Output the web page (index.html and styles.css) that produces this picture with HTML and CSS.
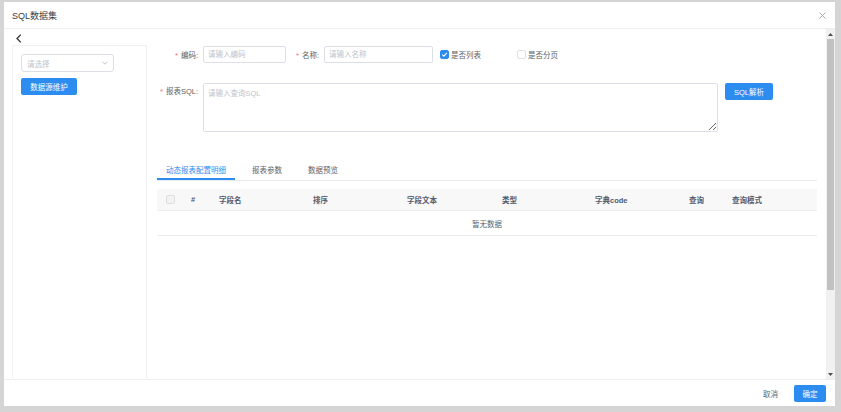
FILE: index.html
```html
<!DOCTYPE html>
<html lang="zh-CN">
<head>
<meta charset="utf-8">
<title>SQL数据集</title>
<link rel="stylesheet" href="styles.css">
</head>
<body>
<div class="modal">
  <div class="m-header">
    <span class="m-title">SQL数据集</span>
    <svg class="m-close" width="7" height="7" viewBox="0 0 7 7"><path d="M0.5 0.5L6.5 6.5M6.5 0.5L0.5 6.5" stroke="#a0a4ab" stroke-width="0.9" fill="none"/></svg>
  </div>
  <div class="m-body">
    <div class="content">
      <div class="back">
        <svg width="6" height="9" viewBox="0 0 6 9"><path d="M4.8 0.6L1 4.5L4.8 8.4" stroke="#333" stroke-width="1.3" fill="none"/></svg>
      </div>
      <div class="main">
        <aside class="left-panel">
          <div class="select">
            <span>请选择</span>
            <svg width="6" height="4" viewBox="0 0 6 4"><path d="M0.5 0.8L3 3.2L5.5 0.8" stroke="#b4b8bf" stroke-width="0.8" fill="none"/></svg>
          </div>
          <button class="btn btn-primary btn-ds">数据源维护</button>
        </aside>
        <section class="right">
          <div class="form-row">
            <label class="label w56"><i class="req">*</i>编码:</label>
            <input class="input w83" placeholder="请输入编码">
            <label class="label w38"><i class="req">*</i>名称:</label>
            <input class="input w109" placeholder="请输入名称">
            <span class="check check-1 checked"><span class="box"><svg width="7" height="7" viewBox="0 0 7 7"><path d="M1.3 3.6L2.9 5.1L5.8 1.9" stroke="#fff" stroke-width="1.1" fill="none"/></svg></span>是否列表</span>
            <span class="check check-2"><span class="box"></span>是否分页</span>
          </div>
          <div class="form-row row2">
            <label class="label w56"><i class="req">*</i>报表SQL:</label>
            <textarea class="textarea" placeholder="请输入查询SQL"></textarea>
            <button class="btn btn-primary btn-sql">SQL解析</button>
          </div>
          <div class="tabs">
            <span class="tab active">动态报表配置明细</span>
            <span class="tab">报表参数</span>
            <span class="tab">数据预览</span>
          </div>
          <div class="table">
            <div class="thead">
              <div class="cell center"><span class="hcheck"></span></div>
              <div class="cell">#</div>
              <div class="cell">字段名</div>
              <div class="cell">排序</div>
              <div class="cell">字段文本</div>
              <div class="cell">类型</div>
              <div class="cell">字典code</div>
              <div class="cell">查询</div>
              <div class="cell">查询模式</div>
            </div>
            <div class="empty">暂无数据</div>
          </div>
        </section>
      </div>
    </div>
    <div class="scrollbar">
      <div class="sb-arrow"><svg width="5" height="3" viewBox="0 0 5 3"><path d="M0 3L2.5 0L5 3Z" fill="#505050"/></svg></div>
      <div class="sb-thumb"></div>
      <div class="sb-space"></div>
      <div class="sb-arrow"><svg width="5" height="3" viewBox="0 0 5 3"><path d="M0 0L2.5 3L5 0Z" fill="#505050"/></svg></div>
    </div>
  </div>
  <div class="m-footer">
    <button class="btn btn-text">取消</button>
    <button class="btn btn-primary btn-ok">确定</button>
  </div>
</div>
</body>
</html>
```
FILE: styles.css
```css
html, body {
  margin: 0;
  padding: 0;
}
body {
  background: #d5d5d5;
  font-family: "Liberation Sans", "Noto Sans CJK SC", sans-serif;
  font-size: 7.5px;
  color: #606266;
  height: 412px;
  overflow: hidden;
}
.modal {
  margin: 2px 6px 0 4px;
  height: 404px;
  background: #fff;
  display: flex;
  flex-direction: column;
}
.m-header {
  height: 26px;
  flex: none;
  border-bottom: 1px solid #eceef2;
  display: flex;
  align-items: center;
  justify-content: space-between;
  padding: 0 9px 0 8px;
}
.m-title {
  font-size: 9px;
  color: #3a3d42;
}
.m-close {
  display: block;
}
.m-body {
  flex: 1;
  display: flex;
  min-height: 0;
}
.content {
  flex: 1;
  min-width: 0;
  display: flex;
  flex-direction: column;
  padding: 0 9px 1px 8px;
  overflow: hidden;
}
.back {
  height: 16px;
  flex: none;
  padding-left: 4px;
  box-sizing: border-box;
  padding-top: 5px;
}
.back svg {
  display: block;
}
.main {
  flex: 1;
  display: flex;
  min-height: 0;
}
.left-panel {
  width: 135px;
  flex: none;
  box-sizing: border-box;
  border: 1px solid #eef0f4;
  border-bottom: none;
  padding: 8px;
}
.select {
  width: 93px;
  height: 18px;
  box-sizing: border-box;
  border: 1px solid #dcdfe6;
  border-radius: 3px;
  display: flex;
  align-items: center;
  justify-content: space-between;
  padding: 0 5px 0 5px;
  color: #c0c4cc;
}
.select svg {
  display: block;
}
.btn {
  font-family: inherit;
  font-size: 7.5px;
  border: none;
  margin: 0;
  padding: 0;
  cursor: pointer;
  background: none;
}
.btn-primary {
  background: #2d8cf0;
  color: #fff;
  border-radius: 2px;
  height: 17px;
}
.btn-ds {
  display: block;
  margin-top: 6px;
  width: 56px;
}
.right {
  flex: 1;
  min-width: 0;
  padding-top: 1px;
}
.form-row {
  display: flex;
  align-items: center;
  height: 17px;
}
.label {
  box-sizing: border-box;
  text-align: right;
  padding-right: 5px;
  flex: none;
  color: #606266;
  white-space: nowrap;
}
.req {
  font-style: normal;
  color: #f56c6c;
  margin-right: 3px;
}
.w56 { width: 56px; }
.w38 { width: 38px; }
.input {
  box-sizing: border-box;
  height: 17px;
  border: 1px solid #dcdfe6;
  border-radius: 2px;
  padding: 0 4px;
  font-family: inherit;
  font-size: 7.5px;
  color: #606266;
  outline: none;
  margin: 0;
  flex: none;
}
.input::placeholder,
.textarea::placeholder {
  color: #c0c4cc;
}
.w83 { width: 83px; }
.w109 { width: 109px; }
.check {
  display: flex;
  align-items: center;
  color: #606266;
  white-space: nowrap;
}
.check-1 { margin-left: 7px; }
.check-2 { margin-left: 36px; }
.box {
  width: 9px;
  height: 9px;
  box-sizing: border-box;
  border: 1px solid #dcdfe6;
  border-radius: 2px;
  background: #fff;
  margin-right: 2px;
  display: flex;
  align-items: center;
  justify-content: center;
}
.checked .box {
  background: #2d8cf0;
  border-color: #2d8cf0;
}
.box svg {
  display: block;
}
.row2 {
  margin-top: 20px;
  height: 49px;
  align-items: flex-start;
}
.row2 .label {
  line-height: 17px;
}
.textarea {
  box-sizing: border-box;
  width: 515px;
  height: 49px;
  border: 1px solid #dcdfe6;
  border-radius: 2px;
  padding: 3px 4px;
  font-family: inherit;
  font-size: 7.5px;
  color: #606266;
  outline: none;
  margin: 0;
  flex: none;
  resize: both;
}
.btn-sql {
  margin-left: 7px;
  width: 48px;
  flex: none;
}
.tabs {
  margin: 29px 0 0 10px;
  display: flex;
  border-bottom: 1px solid #e8eaec;
  height: 20px;
  box-sizing: border-box;
}
.tab {
  padding: 0 9px;
  margin-right: 8px;
  line-height: 20px;
  height: 19px;
  color: #606266;
  white-space: nowrap;
}
.tab.active {
  color: #2d8cf0;
  box-shadow: inset 0 -2px 0 #2d8cf0;
}
.table {
  margin: 8px 0 0 10px;
}
.thead {
  display: grid;
  grid-template-columns: 26px 28px 94px 94px 95px 93px 94px 43px 93px;
  height: 22px;
  background: #f8f8f9;
  border-bottom: 1px solid #ebedf0;
  box-sizing: border-box;
  color: #515a6e;
  font-weight: bold;
}
.cell {
  display: flex;
  align-items: center;
  padding-left: 8px;
  white-space: nowrap;
}
.cell.center {
  padding-left: 0;
  justify-content: center;
}
.hcheck {
  width: 9px;
  height: 9px;
  box-sizing: border-box;
  border: 1px solid #dcdee2;
  border-radius: 2px;
  background: #f3f3f3;
}
.empty {
  height: 25px;
  box-sizing: border-box;
  border-bottom: 1px solid #e8eaec;
  display: flex;
  align-items: center;
  justify-content: center;
  color: #606266;
}
.scrollbar {
  width: 9px;
  flex: none;
  background: #f1f1f1;
  display: flex;
  flex-direction: column;
}
.sb-arrow {
  height: 10px;
  flex: none;
  display: flex;
  align-items: center;
  justify-content: center;
}
.sb-arrow svg {
  display: block;
}
.sb-thumb {
  height: 251px;
  margin: 0 1px;
  background: #c1c1c1;
  flex: none;
}
.sb-space {
  flex: 1;
}
.m-footer {
  height: 26px;
  flex: none;
  border-top: 1px solid #eceef2;
  display: flex;
  align-items: center;
  justify-content: flex-end;
  padding-right: 9px;
}
.btn-text {
  color: #606266;
  padding: 0 8px;
  margin-right: 8px;
  height: 17px;
}
.btn-ok {
  width: 32px;
}
```
